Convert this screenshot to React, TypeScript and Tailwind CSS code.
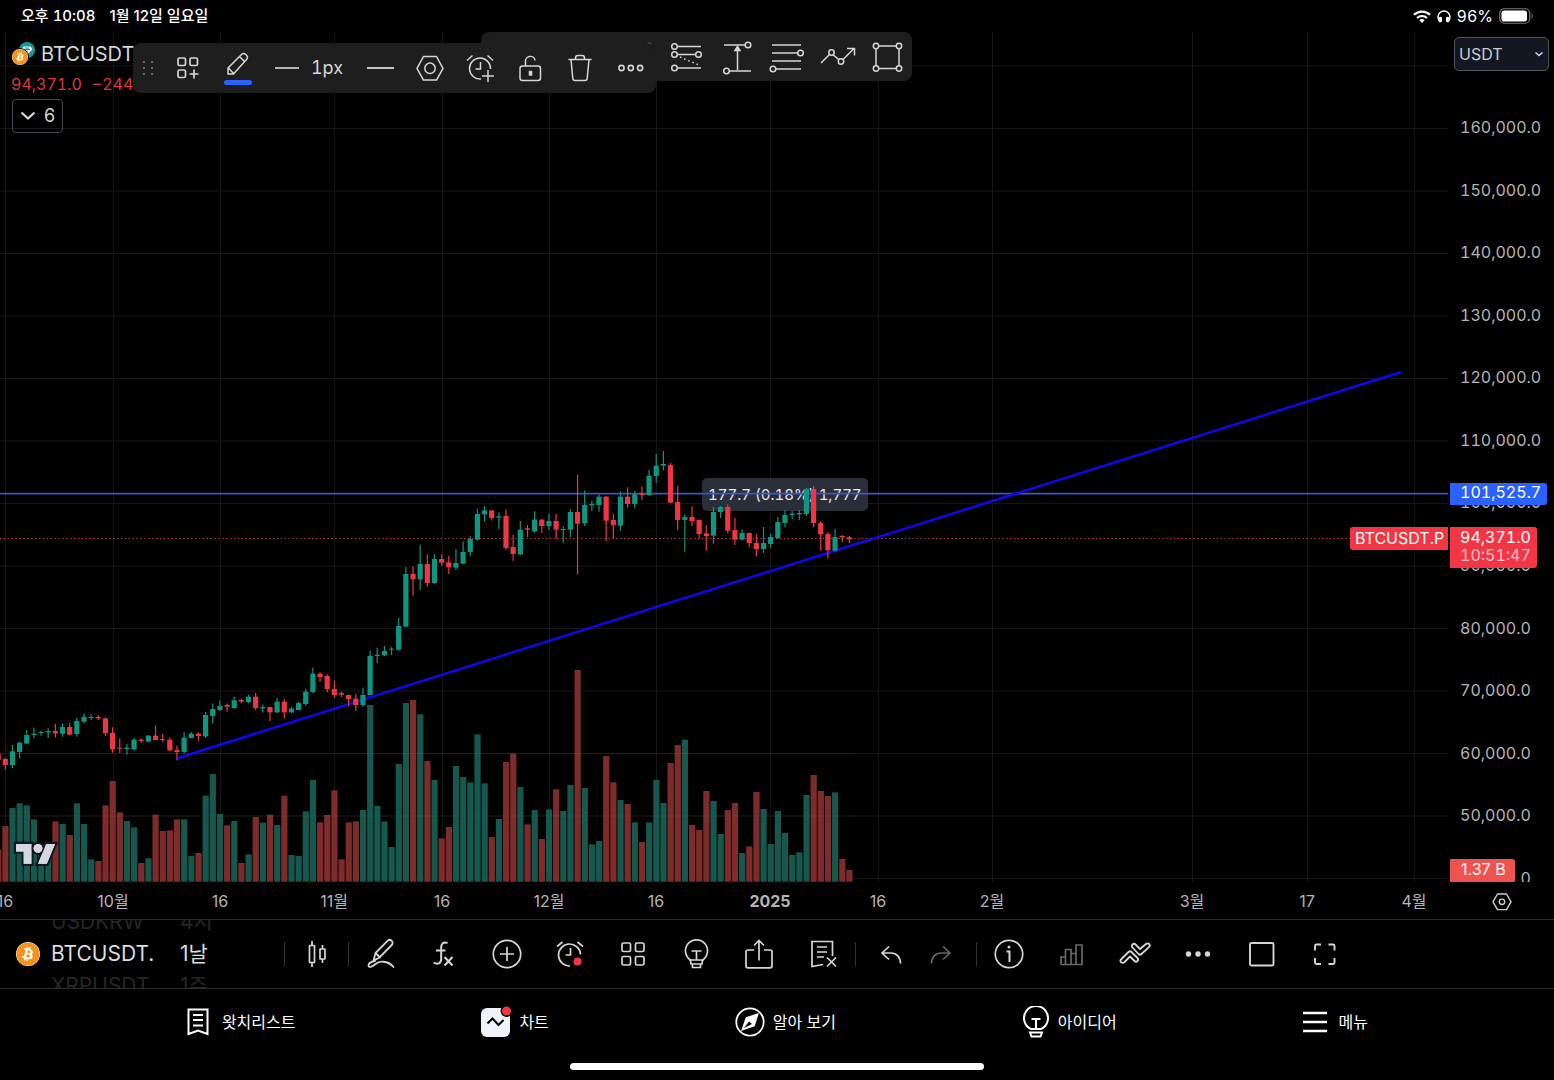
import React from "react";
import { FaBitcoin } from "react-icons/fa";

type Row = [number, number, number, number, number, number];

// Each row: up (1) or down (0), high, body top, body bottom, low, volume top.
// Values are thirds of a chart unit measured from the section's origin.
const sections: { first: number; origin: number; volumeOrigin: number; rows: Row[] }[] = [
  {
    first: -1,
    origin: 640,
    volumeOrigin: 640,
    rows: [
      [0, 340, 342, 360, 362, 628],
      [0, 353, 357, 375, 389, 558],
      [1, 315, 334, 375, 385, 504],
      [1, 305, 308, 336, 355, 490],
      [1, 270, 285, 311, 312, 496],
      [1, 263, 281, 285, 295, 538],
      [1, 273, 276, 279, 287, 645],
      [1, 265, 273, 277, 294, 640],
      [0, 252, 273, 280, 293, 544],
      [1, 251, 261, 281, 290, 552],
      [0, 249, 261, 284, 286, 585],
      [1, 233, 243, 282, 290, 490],
      [1, 220, 231, 245, 250, 552],
      [1, 223, 231, 234, 240, 658],
      [0, 225, 231, 235, 240, 663],
      [0, 233, 235, 280, 289, 496],
      [0, 262, 279, 328, 338, 423],
      [0, 296, 323, 326, 339, 517],
      [1, 312, 323, 327, 344, 543],
      [1, 294, 299, 328, 332, 562],
      [0, 295, 299, 303, 308, 669],
      [1, 285, 287, 305, 307, 655],
      [0, 256, 287, 300, 301, 524],
      [0, 281, 297, 300, 306, 573],
      [0, 293, 299, 331, 334, 571],
      [0, 317, 330, 336, 361, 538],
      [1, 276, 293, 336, 340, 538],
      [1, 276, 281, 294, 295, 648],
      [0, 277, 281, 288, 302, 639],
      [1, 216, 225, 289, 294, 467],
      [1, 190, 207, 228, 251, 402],
      [1, 181, 198, 210, 213, 522],
      [0, 190, 195, 200, 215, 556],
      [1, 170, 181, 204, 206, 543],
      [0, 176, 180, 185, 190, 669],
      [1, 164, 170, 186, 190, 643],
      [0, 159, 170, 204, 211, 531],
      [1, 194, 201, 205, 218, 548],
      [0, 200, 201, 217, 243, 524],
      [1, 174, 185, 217, 219, 555],
      [0, 177, 185, 217, 235, 467],
      [1, 200, 206, 217, 220, 645],
    ],
  },
  {
    first: 41,
    origin: 540,
    volumeOrigin: 540,
    rows: [
      [1, 484, 489, 510, 511, 948],
      [1, 446, 455, 492, 497, 814],
      [1, 383, 401, 456, 459, 720],
      [0, 397, 401, 411, 426, 847],
      [0, 403, 408, 447, 457, 825],
      [0, 422, 447, 465, 473, 751],
      [0, 455, 459, 464, 471, 958],
      [0, 464, 465, 477, 499, 847],
      [0, 462, 476, 495, 513, 844],
      [1, 443, 465, 495, 500, 810],
      [1, 332, 348, 465, 466, 495],
      [1, 323, 344, 348, 369, 798],
      [1, 318, 333, 346, 348, 844],
      [1, 322, 326, 329, 345, 921],
      [1, 234, 258, 329, 332, 672],
      [1, 81, 102, 260, 261, 489],
      [0, 79, 102, 118, 168, 480],
      [1, 14, 72, 118, 150, 523],
      [0, 44, 72, 129, 140, 663],
      [1, 43, 57, 129, 132, 720],
      [0, 43, 57, 68, 77, 895],
      [0, 48, 67, 82, 102, 861],
      [1, 27, 69, 83, 90, 678],
      [1, 4, 36, 71, 72, 711],
    ],
  },
  {
    first: 65,
    origin: 440,
    volumeOrigin: 540,
    rows: [
      [1, 288, 297, 336, 349, 727],
      [1, 207, 222, 299, 302, 583],
      [1, 198, 211, 223, 244, 730],
      [0, 210, 211, 234, 242, 891],
      [1, 217, 229, 233, 268, 837],
      [0, 208, 228, 324, 330, 666],
      [0, 284, 321, 342, 363, 641],
      [1, 243, 269, 343, 344, 741],
      [0, 255, 265, 269, 291, 853],
      [1, 214, 239, 274, 278, 810],
      [0, 237, 239, 258, 279, 897],
      [1, 221, 243, 258, 270, 808],
      [0, 222, 243, 269, 296, 748],
      [1, 258, 267, 270, 309, 813],
      [1, 207, 216, 269, 291, 735],
      [0, 104, 216, 251, 403, 390],
    ],
  },
  {
    first: 81,
    origin: 440,
    volumeOrigin: 640,
    rows: [
      [1, 151, 195, 250, 258, 444],
      [1, 182, 192, 196, 213, 613],
      [1, 163, 170, 195, 215, 603],
      [0, 168, 170, 242, 303, 348],
      [0, 222, 240, 256, 296, 427],
      [1, 154, 170, 257, 272, 480],
      [0, 142, 170, 192, 203, 492],
      [1, 153, 163, 192, 205, 547],
      [0, 140, 161, 165, 180, 606],
      [1, 89, 107, 165, 168, 547],
      [1, 42, 77, 108, 129, 420],
      [1, 33, 72, 77, 91, 489],
      [0, 69, 75, 188, 189, 369],
      [0, 138, 186, 240, 270, 315],
      [1, 223, 231, 240, 335, 299],
      [0, 199, 231, 243, 258, 555],
      [0, 238, 240, 282, 296, 570],
      [0, 255, 280, 288, 332, 453],
      [1, 201, 216, 287, 311, 483],
      [1, 198, 201, 216, 234, 582],
      [0, 193, 201, 272, 280, 510],
      [0, 234, 270, 299, 315, 489],
      [1, 268, 279, 299, 301, 639],
      [0, 278, 279, 309, 322, 619],
      [0, 282, 309, 327, 349, 456],
      [1, 261, 309, 327, 339, 507],
      [1, 281, 291, 312, 324, 612],
      [1, 231, 246, 294, 297, 513],
      [1, 210, 225, 249, 262, 579],
      [1, 213, 221, 225, 237, 645],
      [1, 210, 219, 223, 240, 637],
      [1, 144, 147, 222, 228, 465],
      [0, 138, 147, 249, 262, 405],
      [0, 243, 249, 283, 332, 453],
      [0, 276, 282, 331, 355, 468],
      [1, 267, 291, 332, 335, 457],
      [0, 285, 288, 292, 306, 657],
      [0, 288, 292, 298, 309, 690],
    ],
  },
];

const candles = sections.flatMap((s) =>
  s.rows.map(([up, high, top, bottom, low, vol], k) => ({
    x: 5.3 + 7.153 * (s.first + k),
    up: up === 1,
    high: s.origin + high / 3,
    top: s.origin + top / 3,
    bottom: s.origin + bottom / 3,
    low: s.origin + low / 3,
    vol: s.volumeOrigin + vol / 3,
  }))
);

const prices = [
  "160,000.0", "150,000.0", "140,000.0", "130,000.0", "120,000.0", "110,000.0", "100,000.0",
  "90,000.0", "80,000.0", "70,000.0", "60,000.0", "50,000.0", "40,000.0",
];

const dates: [number, string][] = [
  [5, "16"], [113, "10월"], [220, "16"], [334, "11월"], [442, "16"], [549, "12월"], [656, "16"],
  [770, "2025"], [878, "16"], [992, "2월"], [1192, "3월"], [1307, "17"], [1414, "4월"],
];

function Chart() {
  return (
    <svg viewBox="0 32 1554 887" className="block h-auto w-full" role="img" aria-label="BTCUSDT.P">
      <defs>
        <clipPath id="pane">
          <rect x="0" y="32" width="1554" height="850" />
        </clipPath>
      </defs>
      <g clipPath="url(#pane)">
        <g stroke="#161616" strokeWidth="1">
          {[-1, ...prices.keys()].map((i) => (
            <line key={i} x1="0" x2="1448" y1={128.5 + i * 62.5} y2={128.5 + i * 62.5} />
          ))}
          {dates.map(([x]) => (
            <line key={x} x1={x + 0.5} x2={x + 0.5} y1="32" y2="882" />
          ))}
        </g>
        {candles.map((c) => (
          <rect key={c.x} x={c.x - 3} y={c.vol} width="6.2" height={881.7 - c.vol} fill={c.up ? "#16574e" : "#7d2c2b"} />
        ))}
        <g stroke="#ffffff" strokeOpacity="0.05">
          <line x1="0" x2="853" y1="816" y2="816" />
          <line x1="0" x2="853" y1="753.5" y2="753.5" />
        </g>
        <rect x="702" y="478" width="166" height="33" rx="5" fill="#2a2e39" />
        <text x="708" y="500" fontSize="15" fill="#e6e8ee">177.7 (0.18%) 1,777</text>
        <line x1="0" x2="1448" y1="493.7" y2="493.7" stroke="#3c57bd" strokeWidth="1.8" />
        <line x1="0" x2="1350" y1="538.5" y2="538.5" stroke="#c4404b" strokeWidth="1" strokeDasharray="1.3 2.6" />
        <line x1="178" y1="758" x2="1401" y2="372" stroke="#1205f5" strokeWidth="2.4" />
        {candles.map((c) => (
          <g key={c.x} fill={c.up ? "#0f9680" : "#ef3645"}>
            <rect x={c.x - 0.6} y={c.high} width="1.2" height={c.low - c.high} />
            <rect x={c.x - 2.6} y={c.top} width="5.2" height={c.bottom - c.top} />
          </g>
        ))}
        <g transform="translate(16 839.5) scale(1.1)" fill="#d5d8e0" stroke="#131722" strokeWidth="4" paintOrder="stroke">
          <path d="M14 22H7V11H0V4h14v18z" />
          <path d="M28 22h-8l7.500-18h8L28 22z" />
          <circle cx="20" cy="8" r="4" />
          <g stroke="none">
            <path d="M14 22H7V11H0V4h14v18z" />
            <path d="M28 22h-8l7.500-18h8L28 22z" />
            <circle cx="20" cy="8" r="4" />
          </g>
        </g>
        <g fontSize="16" fill="#b4b4b4">
          {prices.map((p, i) => (
            <text key={p} x="1460" y={133 + i * 62.58}>{p}</text>
          ))}
        </g>
      </g>
      <path d="M1450 483h94a3 3 0 0 1 3 3v16a3 3 0 0 1-3 3h-94z" fill="#2962ff" />
      <path d="M1353 527h95v23h-95a3 3 0 0 1-3-3v-17a3 3 0 0 1 3-3z" fill="#f23645" />
      <path d="M1450 527h84a3 3 0 0 1 3 3v35a3 3 0 0 1-3 3h-84z" fill="#f23645" />
      <path d="M1450 859h62a3 3 0 0 1 3 3v17a3 3 0 0 1-3 3h-62z" fill="#ef5350" />
      <g fontSize="16" fill="#fff">
        <text x="1460" y="498">101,525.7</text>
        <text x="1355" y="544">BTCUSDT.P</text>
        <text x="1460" y="543">94,371.0</text>
        <text x="1460" y="561" fill="#ffc2c7">10:51:47</text>
        <text x="1461" y="875" className="proportional-nums">1.37 B</text>
      </g>
      <g fontSize="16" fill="#b4b4b4" textAnchor="middle" className="proportional-nums">
        {dates.map(([x, t]) => (
          <text key={x} x={x} y="907" fontWeight={t === "2025" ? 700 : 400}>{t}</text>
        ))}
      </g>
      <g fill="none" stroke="#cfcfcf" strokeWidth="1.4" strokeLinejoin="round">
        <path d="M1497.500 894h9l4.500 7.800-4.500 7.800h-9l-4.500-7.800z" />
        <circle cx="1502" cy="901.800" r="2.700" />
      </g>
    </svg>
  );
}

function Icon({ children, w = 1.7, className = "" }: { children: React.ReactNode; w?: number; className?: string }) {
  return (
    <svg viewBox="0 0 32 32" fill="none" stroke="currentColor" strokeWidth={w} className={`size-8 shrink-0 overflow-visible ${className}`} aria-hidden="true">
      {children}
    </svg>
  );
}

function Tool({ label, className = "w-[50px]", children }: { label: string; className?: string; children: React.ReactNode }) {
  return (
    <button type="button" aria-label={label} className={`flex h-full shrink-0 items-center justify-center ${className}`}>
      {children}
    </button>
  );
}

function AlarmShape() {
  return (
    <>
      <path d="M26.500 16.500A11 11 0 1 0 16 28" />
      <path d="M16.500 10v7h-5" />
      <path d="M3 8.500 8.500 4M29 8.500 23.500 4" />
    </>
  );
}

function ShapesBar() {
  return (
    <div className="absolute top-0 left-[481px] flex h-[49px] w-[431px] items-center justify-end rounded-lg bg-[#1e1e1e] text-[#d6d6d6]">
      <Tool label="추세선">
        <Icon w={1.4}><circle cx="27.500" cy="5.500" r="3" /><path d="M25 8 5 27" /></Icon>
      </Tool>
      <Tool label="피보나치">
        <Icon w={1.5}>
          <path d="M6 5.500h24M6 13.500h19M6 27h24" />
          <path d="M9 16l19 8" strokeDasharray="1.500 3" />
          <g fill="#1e1e1e"><circle cx="3.500" cy="5.500" r="2.800" /><circle cx="3.500" cy="13.500" r="2.800" /><circle cx="27.500" cy="13.500" r="2.800" /><circle cx="3.500" cy="27" r="2.800" /></g>
        </Icon>
      </Tool>
      <Tool label="가격 범위">
        <Icon w={1.5}>
          <path d="M3 4h21M8 30h22M16.500 29V8" /><path d="M14 9.500l2.500-4 2.500 4z" fill="currentColor" />
          <g fill="#1e1e1e"><circle cx="27" cy="4" r="2.800" /><circle cx="5.500" cy="30" r="2.800" /></g>
        </Icon>
      </Tool>
      <Tool label="되돌림">
        <Icon w={1.5}>
          <path d="M1 4h29M1 12h26M1 20h29M5 28h25" />
          <g fill="#1e1e1e"><circle cx="29.500" cy="12" r="2.800" /><circle cx="2" cy="28" r="2.800" /></g>
        </Icon>
      </Tool>
      <Tool label="패턴">
        <Icon w={1.5}>
          <path d="M0 22 10 12 20 20.500 33 7.500M26 7.500h7.500v7" />
          <g fill="#1e1e1e"><circle cx="10.500" cy="11.500" r="2.700" /><circle cx="20" cy="20.500" r="2.700" /></g>
        </Icon>
      </Tool>
      <Tool label="사각형">
        <Icon w={1.5}>
          <rect x="5" y="5" width="23" height="22.500" />
          <g fill="#1e1e1e"><circle cx="5" cy="5" r="2.700" /><circle cx="28" cy="5" r="2.700" /><circle cx="5" cy="27.500" r="2.700" /><circle cx="28" cy="27.500" r="2.700" /></g>
        </Icon>
      </Tool>
    </div>
  );
}

function DrawingBar() {
  return (
    <div className="absolute top-[11px] left-[133px] flex h-[50px] items-center rounded-lg bg-[#1e1e1e] pr-px text-[#d6d6d6]">
      <Tool label="이동" className="w-[30px]">
        <span className="grid grid-cols-2 gap-x-1.5 gap-y-1">
          {[0, 1, 2, 3, 4, 5].map((i) => <span key={i} className="size-0.5 bg-[#666]" />)}
        </span>
      </Tool>
      <Tool label="템플릿">
        <Icon>
          <rect x="6" y="6" width="7.500" height="7.500" rx="1.500" /><rect x="18" y="6" width="7.500" height="7.500" rx="1.500" /><rect x="6" y="18" width="7.500" height="7.500" rx="1.500" />
          <path d="M22 17.500v9M17.500 22h9" />
        </Icon>
      </Tool>
      <Tool label="선 색깔">
        <span className="flex flex-col items-center">
          <svg viewBox="0 0 24 24" className="size-6" fill="none" stroke="currentColor" strokeWidth="1.500" aria-hidden="true">
            <path d="M2 22v-6L15.500 2.500c1.200-1.200 3-1.200 4.300 0l.7.7c1.200 1.300 1.200 3 0 4.300L7.500 22zM13.500 4.500l5.500 5.500M2.500 16l5 5.500" />
          </svg>
          <span className="mt-1 h-[5px] w-7 rounded-sm bg-[#2962ff]" />
        </span>
      </Tool>
      <Tool label="선 굵기" className="w-[92px] gap-3">
        <span className="h-0.5 w-6 bg-[#b4b4b4]" />
        <span className="text-lg">1px</span>
      </Tool>
      <Tool label="선 스타일"><span className="h-0.5 w-[27px] bg-[#c4c4c4]" /></Tool>
      <Tool label="설정">
        <Icon w={1.5}><path d="M9.500 4.500h13L29 16.300l-6.500 11.800h-13L3 16.300z" strokeLinejoin="round" /><circle cx="16" cy="16.300" r="5.200" /></Icon>
      </Tool>
      <Tool label="얼러트 추가">
        <Icon w={1.5}><path d="M26.500 17A10.500 10.500 0 1 0 17 27M16.500 10v7h-5M3 8.500 8.500 3.500M29 8.500 23.500 3.500M24 18v12M18 24h12" /></Icon>
      </Tool>
      <Tool label="잠금">
        <Icon w={1.5}><rect x="6" y="14" width="20.500" height="14.500" rx="2.500" /><path d="M11.500 14v-4a4.800 4.800 0 0 1 9.600-1.500" /><rect x="15.500" y="19.500" width="2" height="3.500" fill="currentColor" /></Icon>
      </Tool>
      <Tool label="지우기">
        <Icon w={1.5}><path d="M4.500 7.500h23M11.500 7.500V6c0-1.500 1-2.500 2.500-2.500h4c1.500 0 2.500 1 2.500 2.500v1.500M7 7.500l1.800 19c.1 1.200 1 2 2.200 2h10c1.200 0 2.100-.8 2.200-2L25 7.500" /></Icon>
      </Tool>
      <Tool label="더보기">
        <Icon w={1.6}><circle cx="7.500" cy="16" r="2.600" /><circle cx="16.800" cy="16" r="2.600" /><circle cx="26.100" cy="16" r="2.600" /></Icon>
      </Tool>
    </div>
  );
}

function Legend() {
  return (
    <div className="absolute top-2.5 left-[11px] text-[#d6d6d6]">
      <div className="flex h-6 items-center gap-1.5">
        <span className="relative size-6">
          <svg viewBox="0 0 16 16" className="absolute top-0 right-0 size-4" aria-hidden="true">
            <circle cx="8" cy="8" r="8" fill="#149a92" /><path d="M4.500 4.500h7l2 3-5.500 5-5.500-5z" fill="#fff" /><path d="M5.500 6h5M8 6v4M5 7.500h6" stroke="#149a92" />
          </svg>
          <span className="absolute bottom-0 left-0 rounded-full border border-black bg-white"><FaBitcoin className="size-4 text-[#f7931a]" /></span>
        </span>
        <span className="text-xl">BTCUSDT.P</span>
      </div>
      <div className="mt-1.5 flex gap-2.5 text-base leading-6 whitespace-nowrap text-[#dd3643]">
        <span>94,371.0</span>
        <span>−244.4</span>
      </div>
      <button type="button" aria-label="지표 6" className="mt-[3px] ml-px flex h-[34px] w-[51px] items-center justify-center gap-2 rounded-sm border border-[#434651]">
        <svg viewBox="0 0 16 10" className="h-2.5 w-4" fill="none" stroke="currentColor" strokeWidth="2.200" aria-hidden="true"><path d="m1.500 1.500 6.500 6 6.500-6" /></svg>
        <span className="text-lg">6</span>
      </button>
    </div>
  );
}

function StatusBar() {
  return (
    <header className="flex h-8 items-center justify-between pr-5 pl-[21px] text-[15px] font-medium text-white">
      <div className="flex gap-3.5"><span>오후 10:08</span><span className="proportional-nums">1월 12일 일요일</span></div>
      <div className="flex items-center gap-1.5">
        <svg viewBox="0 0 18 13" className="h-[13px] w-[18px]" fill="none" stroke="currentColor" strokeWidth="2.200" aria-hidden="true">
          <path d="M1 4.800a11.500 11.500 0 0 1 16 0M4 8a7.300 7.300 0 0 1 10 0" /><path d="M9 13 6.300 10.200a4 4 0 0 1 5.400 0z" fill="currentColor" stroke="none" />
        </svg>
        <svg viewBox="0 0 14 14" className="size-3.5" fill="none" stroke="currentColor" strokeWidth="1.500" aria-hidden="true">
          <path d="M2.500 12A6 6 0 1 1 11.500 12" /><rect x="2.500" y="8.500" width="1.800" height="4" rx=".8" fill="currentColor" /><rect x="9.700" y="8.500" width="1.800" height="4" rx=".8" fill="currentColor" />
        </svg>
        <span className="text-base font-normal">96%</span>
        <svg viewBox="0 0 35 16" className="h-4 w-[35px]" aria-hidden="true">
          <rect x=".75" y=".75" width="30" height="14.500" rx="4.500" fill="none" stroke="#777" strokeWidth="1.200" /><rect x="2.500" y="2.500" width="25.500" height="11" rx="2.800" fill="#fff" /><path d="M32.500 5.500c1.600.6 1.600 4.400 0 5z" fill="#777" />
        </svg>
      </div>
    </header>
  );
}

const Divider = () => <span className="h-6 w-px shrink-0 bg-[#333]" />;

function Wheel({ items, className }: { items: string[]; className: string }) {
  return (
    <div className={`flex h-full flex-col items-start justify-center overflow-hidden text-[21px] leading-8 proportional-nums ${className}`}>
      <span className="text-[#262626]">{items[0]}</span>
      <span className="text-[#dcdcdc]">{items[1]}</span>
      <span className="text-[#262626]">{items[2]}</span>
    </div>
  );
}

function BottomToolbar() {
  const b = "w-[63px]";
  return (
    <div className="flex h-[70px] shrink-0 items-center border-y border-[#2c2c2c] text-[#d6d6d6]">
      <div className="flex h-full w-[284px] shrink-0 items-center pl-4">
        <span className="rounded-full bg-white"><FaBitcoin className="size-6 text-[#f7931a]" /></span>
        <Wheel className="ml-[11px] w-[129px]" items={["USDKRW", "BTCUSDT.", "XRPUSDT."]} />
        <Wheel className="w-20" items={["4시", "1날", "1주"]} />
      </div>
      <Divider />
      <Tool label="차트 타입" className={b}>
        <Icon><rect x="8.500" y="7.500" width="5" height="17" rx=".5" /><path d="M11 3v4.500M11 24.500V29M21.500 7v4M21.500 21v4" /><rect x="19" y="11" width="5" height="10" rx=".5" /></Icon>
      </Tool>
      <Divider />
      <Tool label="그리기" className={b}>
        <Icon w={1.8}><path d="M8.500 22.500 10.500 15 22.500 2.800c1.200-1.200 3-1.200 4.200 0s1.200 3 0 4.200L14.500 19.500zM10.500 15l4.500 4.500M10 23c-3 .5-6.500 2-6.500 4.500 0 2.500 3.500 1.500 7-1.500s12-4 18 3" strokeLinecap="round" /></Icon>
      </Tool>
      <Tool label="지표" className={b}>
        <Icon w={2}><path d="M19.500 5c-3.500-1.500-6.300.3-6.300 4v12c0 4.500-4 6-7.500 3.500M8 12.500h9.500M16.500 19l8 8.500M24.500 19l-8 8.500" /></Icon>
      </Tool>
      <Tool label="추가" className={b}><Icon><circle cx="16" cy="16" r="13.700" /><path d="M16 9v14M9 16h14" /></Icon></Tool>
      <Tool label="얼러트" className={b}><Icon><AlarmShape /><circle cx="23.500" cy="23.500" r="4" fill="#f23645" stroke="none" /></Icon></Tool>
      <Tool label="레이아웃" className={b}>
        <Icon><rect x="5" y="5" width="8.500" height="8.500" rx="1.500" /><rect x="18.500" y="5" width="8.500" height="8.500" rx="1.500" /><rect x="5" y="18.500" width="8.500" height="8.500" rx="1.500" /><rect x="18.500" y="18.500" width="8.500" height="8.500" rx="1.500" /></Icon>
      </Tool>
      <Tool label="아이디어" className={b}>
        <Icon><path d="M10.500 22a11 11 0 1 1 12 0M9 22h15M10.500 22l.5 4h11l.5-4M12.500 26v3.500h8V26M11.500 13h10M16.500 13v9" /></Icon>
      </Tool>
      <Tool label="공유" className={b}><Icon><path d="M11 12H5c-1 0-2 .8-2 2v14c0 1 .9 1.800 2 1.800h22c1 0 2-.8 2-1.800V14c0-1.200-1-2-2-2h-6M16 22.500V3M11 7.500l5-5 5 5" /></Icon></Tool>
      <Tool label="메모" className={b}>
        <Icon><path d="M17 26.500 6 28.500V3.500h20.500V18M11 9h10M11 14h10M11 19h7M21 19.500l9 9M30 19.500l-9 9" /></Icon>
      </Tool>
      <div className="ml-0.5 flex h-full items-center">
        <Divider />
        <div className="flex h-full px-2.5">
          <Tool label="실행 취소"><Icon><path d="M14 8.500 7 15l7 6.500M7 15h9c5.500 0 9.500 4 9.500 10.500" /></Icon></Tool>
          <Tool label="다시 실행"><Icon className="text-[#666]"><path d="M18 8.500 25 15l-7 6.500M25 15h-9c-5.500 0-9.500 4-9.500 10.500" /></Icon></Tool>
        </div>
        <Divider />
      </div>
      <Tool label="정보" className={b}><Icon><circle cx="16" cy="16" r="13.700" /><circle cx="16" cy="9" r="1.500" fill="currentColor" stroke="none" /><path d="M13.500 13.500h3V24" strokeWidth="2" /></Icon></Tool>
      <Tool label="트레이딩 패널" className={b}><Icon className="text-[#686868]"><path d="M5 26.500V19h4.500v7.500M9.500 26.500V11.500H15v15M15 26.500v-11h5M20 26.500V7h6v19.500zM5 26.500h21" /></Icon></Tool>
      <Tool label="리플레이" className={b}>
        <Icon w={1.8}>
          <path d="M2 21.500 9.500 14c1-1 2-1 3 0l6 6c2 2-1 5-3 3l-4.500-4.500L5.500 24c-2.300 2-5.500-.5-3.500-2.500z" strokeLinejoin="round" />
          <path d="M13.500 9.500c-2-2 1-5 3-3l4.500 4.500L27 6c2.200-1.800 5 .8 3.200 2.800L22.500 16c-1 1-2 1-3 0z" strokeLinejoin="round" />
        </Icon>
      </Tool>
      <Tool label="더보기" className={b}><Icon><g fill="currentColor" stroke="none"><circle cx="6.500" cy="16" r="2.700" /><circle cx="16" cy="16" r="2.700" /><circle cx="25.500" cy="16" r="2.700" /></g></Icon></Tool>
      <Tool label="창" className={b}><Icon w={1.9}><rect x="5" y="5" width="23.500" height="22.500" rx="1.500" /></Icon></Tool>
      <Tool label="전체 화면" className={b}><Icon w={1.9}><path d="M7 12.500V8c0-.8.700-1.500 1.500-1.500H13M20.500 6.500H25c.8 0 1.500.7 1.500 1.500v4.500M26.500 20v4.500c0 .8-.7 1.500-1.500 1.500h-4.500M13 26H8.500c-.8 0-1.500-.7-1.500-1.500V20" /></Icon></Tool>
    </div>
  );
}

function NavItem({ label, children }: { label: string; children: React.ReactNode }) {
  return <a href="#" className="flex items-center text-base">{children}{label}</a>;
}

function BottomNav() {
  return (
    <nav className="flex h-[65px] items-center justify-evenly text-white">
      <NavItem label="왓치리스트">
        <svg viewBox="0 0 24 28" className="mr-3 h-7 w-6" fill="none" stroke="currentColor" strokeWidth="2" aria-hidden="true"><path d="M2.500 1.500h19V26L12 22.500 2.500 26zM7 7h10M7 12h10M7 17.500h10" /></svg>
      </NavItem>
      <NavItem label="차트">
        <svg viewBox="0 0 30 32" className="mr-2 h-8 w-[30px] overflow-visible" aria-hidden="true">
          <rect x="0" y="2" width="29" height="29" rx="6" fill="#f0f3fa" /><path d="m6.500 17.500 5-5 6 6.500 5-5" fill="none" stroke="#000" strokeWidth="2" /><circle cx="25.500" cy="5" r="6" fill="#000" /><circle cx="25.500" cy="5" r="4.500" fill="#f23645" />
        </svg>
      </NavItem>
      <NavItem label="알아 보기">
        <svg viewBox="0 0 30 30" className="mr-2 size-[30px]" fill="none" stroke="currentColor" strokeWidth="1.800" aria-hidden="true"><circle cx="15" cy="15" r="13.700" /><path d="M22.500 7.500 19 18.500 7.500 22.500 11.500 11z" fill="currentColor" /><path d="M14 14.500 17 17 9 21z" fill="#000" stroke="none" /></svg>
      </NavItem>
      <NavItem label="아이디어">
        <svg viewBox="0 0 28 32" className="mr-2 h-8 w-7" fill="none" stroke="currentColor" strokeWidth="2" aria-hidden="true"><path d="M9 23a12 12 0 1 1 10 0zM9.500 13h9M14 13v10M8 26.500h12l-1.500 4h-9z" /></svg>
      </NavItem>
      <NavItem label="메뉴">
        <svg viewBox="0 0 24 24" className="mr-3 size-6" stroke="currentColor" strokeWidth="2.400" aria-hidden="true"><path d="M0 3h24M0 12h24M0 21h24" /></svg>
      </NavItem>
    </nav>
  );
}

export default function App() {
  return (
    <div className="flex min-h-screen flex-col overflow-hidden bg-black font-['Inter','Noto_Sans_CJK_KR',sans-serif] tabular-nums">
      <StatusBar />
      <main className="relative">
        <Chart />
        <Legend />
        <ShapesBar />
        <DrawingBar />
        <div className="absolute top-[5px] right-[5px] h-[34px] w-[95px]">
          <select aria-label="통화" className="size-full appearance-none rounded-[5px] border border-[#50535e] bg-[#131722] pl-1 text-base text-[#c9ccd5]">
            <option>USDT</option>
          </select>
          <svg viewBox="0 0 10 6" className="pointer-events-none absolute top-3.5 right-[5px] h-1.5 w-2.5" fill="none" stroke="#d1d4dc" strokeWidth="1.600" aria-hidden="true"><path d="m1.500 1.500 3.500 3 3.500-3" /></svg>
        </div>
      </main>
      <BottomToolbar />
      <BottomNav />
      <div className="mx-auto mt-[9px] h-[7px] w-[414px] max-w-full rounded-full bg-white" />
    </div>
  );
}
